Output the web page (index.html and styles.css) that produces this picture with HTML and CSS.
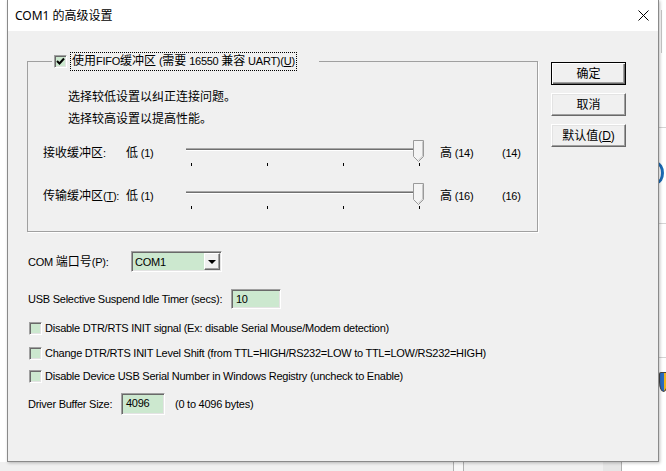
FILE: index.html
```html
<!DOCTYPE html>
<html lang="zh-CN">
<head>
    <meta charset="UTF-8">
    <title>COM1 的高级设置</title>
    <link rel="stylesheet" href="styles.css">
</head>
<body>
    <!-- what shows of the windows behind the dialog -->
    <div class="behind">
        <i class="rTop"></i>
        <i class="rLine l1"></i>
        <i class="rLine l2"></i>
        <i class="rLine l3"></i>
        <i class="rArc"></i>
        <i class="rShield"></i>
        <div class="bottomStrip"></div>
    </div>

    <div class="dialog">
        <div class="titleBar">
            <span class="title">COM1 的高级设置</span>
            <svg class="close" width="11" height="11" viewBox="0 0 11 11">
                <path d="M0.5 0.5 L10.5 10.5 M10.5 0.5 L0.5 10.5" stroke="#000" stroke-width="1" fill="none"/>
            </svg>
        </div>

        <div class="dialogBody">
            <div class="main">
                <fieldset class="group">
                    <legend class="groupTitle">
                        <span class="field box">
                            <svg width="9" height="9" viewBox="0 0 9 9">
                                <path d="M1 4 L3.5 6.5 L8 1.5" stroke="#000" stroke-width="2" fill="none"/>
                            </svg>
                        </span>
                        <span class="focus"><span class="zh">使用</span>FIFO<span class="zh">缓冲区</span> (<span class="zh">需要</span> 16550 <span class="zh">兼容</span> UART)(<u>U</u>)</span>
                    </legend>

                    <p class="hint first zh">选择较低设置以纠正连接问题。</p>
                    <p class="hint zh">选择较高设置以提高性能。</p>

                    <div class="sliderRow">
                        <span class="name"><span class="zh">接收缓冲区</span>:</span>
                        <span class="low"><span class="zh">低</span> (1)</span>
                        <div class="slider">
                            <div class="track"></div>
                            <svg class="thumb" width="11" height="22" viewBox="0 0 11 22">
                                <path d="M0.5 0.5 H10.5 V16.5 L5.5 21.5 L0.5 16.5 Z" fill="#f4f4f4" stroke="#9a9a9a"/>
                                <path d="M9.5 1.5 V16 L5.5 20" stroke="#c8c8c8" fill="none"/>
                            </svg>
                            <div class="ticks"><i></i><i></i><i></i><i></i></div>
                        </div>
                        <span class="high"><span class="zh">高</span> (14)</span>
                        <span class="value">(14)</span>
                    </div>

                    <div class="sliderRow">
                        <span class="name"><span class="zh">传输缓冲区</span>(<u>T</u>):</span>
                        <span class="low"><span class="zh">低</span> (1)</span>
                        <div class="slider">
                            <div class="track"></div>
                            <svg class="thumb" width="11" height="22" viewBox="0 0 11 22">
                                <path d="M0.5 0.5 H10.5 V16.5 L5.5 21.5 L0.5 16.5 Z" fill="#f4f4f4" stroke="#9a9a9a"/>
                                <path d="M9.5 1.5 V16 L5.5 20" stroke="#c8c8c8" fill="none"/>
                            </svg>
                            <div class="ticks"><i></i><i></i><i></i><i></i></div>
                        </div>
                        <span class="high"><span class="zh">高</span> (16)</span>
                        <span class="value">(16)</span>
                    </div>
                </fieldset>

                <div class="row comRow">
                    <span class="label">COM <span class="zh">端口号</span>(P):</span>
                    <div class="field combo">
                        <span>COM1</span>
                        <span class="dropBtn"><i class="arrow"></i></span>
                    </div>
                </div>

                <div class="row usbRow">
                    <span class="label">USB Selective Suspend Idle Timer (secs):</span>
                    <div class="field text">10</div>
                </div>

                <div class="row checkRow c1">
                    <span class="field box"></span>
                    <span>Disable DTR/RTS INIT signal (Ex: disable Serial Mouse/Modem detection)</span>
                </div>
                <div class="row checkRow c2">
                    <span class="field box"></span>
                    <span>Change DTR/RTS INIT Level Shift (from TTL=HIGH/RS232=LOW to TTL=LOW/RS232=HIGH)</span>
                </div>
                <div class="row checkRow c3">
                    <span class="field box"></span>
                    <span>Disable Device USB Serial Number in Windows Registry (uncheck to Enable)</span>
                </div>

                <div class="row bufferRow">
                    <span class="label">Driver Buffer Size:</span>
                    <div class="field text small">4096</div>
                    <span class="range">(0 to 4096 bytes)</span>
                </div>
            </div>

            <div class="buttons">
                <button class="btn default"><span class="zh">确定</span></button>
                <button class="btn"><span class="zh">取消</span></button>
                <button class="btn"><span class="zh">默认值</span>(<u>D</u>)</button>
            </div>
        </div>
    </div>
</body>
</html>
```

FILE: styles.css
```css
*{
    margin: 0;
    padding: 0;
    box-sizing: border-box;
}
body{
    width: 666px;
    height: 471px;
    overflow: hidden;
    position: relative;
    background-color: #fff;
    color: #000;
    font: 11px/16px "Liberation Sans", "Noto Sans CJK SC", sans-serif;
    letter-spacing: -0.25px;
}
/* chinese runs are a size up, like the dialog font */
.zh{
    font-size: 12px;
    letter-spacing: 0;
}

/* windows behind */
.behind i,
.bottomStrip{
    position: absolute;
    display: block;
}
.rTop{
    left: 661px;
    top: 10px;
    width: 1px;
    height: 43px;
    background-color: #c8c8c8;
}
.rLine{
    left: 659px;
    width: 7px;
    height: 1px;
    background-color: #d4d4d4;
}
.l1{ top: 127px; }
.l2{ top: 223px; }
.l3{ top: 357px; }
.rArc{
    left: 650px;
    top: 162px;
    width: 14px;
    height: 22px;
    border: 3px solid #1c6bb5;
    border-radius: 50%;
}
.rShield{
    left: 659px;
    top: 372px;
    width: 9px;
    height: 20px;
    border: 1px solid #444;
    border-radius: 2px 2px 50% 50%;
    background: linear-gradient(to right, #2a6cc0 50%, #f0b41e 50%);
}
.bottomStrip{
    left: 0;
    top: 462px;
    width: 666px;
    height: 9px;
    background: linear-gradient(to right,
        #f0f0f0 0 453px, #b0b0b0 453px 454px, #f7f7f7 454px 463px,
        #b0b0b0 463px 464px, #f0f0f0 464px 603px, #e6e6e6 603px 621px,
        #b0b0b0 621px 622px, #fff 622px);
}

/* dialog */
.dialog{
    position: absolute;
    left: 7px;
    top: 0;
    width: 652px;
    height: 462px;
    background-color: #f0f0f0;
    border: 1px solid #8a8a8a;
    border-top: 0;
    box-shadow: 1px 1px 3px rgba(0,0,0,0.25);
}
.titleBar{
    height: 31px;
    background-color: #fff;
    display: flex;
    align-items: center;
    justify-content: space-between;
    padding: 0 9px 0 7px;
}
.titleBar .title{
    font: 12px/16px "Noto Sans", "Noto Sans CJK SC", sans-serif;
    letter-spacing: 0;
}
.close{
    display: block;
}
.dialogBody{
    display: flex;
    padding-left: 19px;
}
.main{
    width: 511px;
    padding-top: 21px;
}

/* group box */
.group{
    margin: 0;
    padding: 0 0 7px 0;
    min-width: 0;
    border: 1px solid #a0a0a0;
    box-shadow: 1px 1px 0 #fff;
}
.groupTitle{
    margin-left: 24px;
    width: 267px;
    height: 19px;
    padding-left: 2px;
    display: flex;
    align-items: center;
}
.groupTitle .box{
    margin-right: 3px;
}
.focus{
    height: 19px;
    padding: 0 1px;
    line-height: 17px;
    border: 1px dotted #000;
    white-space: nowrap;
}
.hint{
    margin-left: 40px;
    line-height: 22px;
}
.hint.first{
    margin-top: 15px;
}
.sliderRow{
    display: flex;
    height: 43px;
    padding-left: 15px;
}
.hint + .sliderRow{
    margin-top: 8px;
}
.sliderRow .name,
.sliderRow .low,
.sliderRow .high,
.sliderRow .value{
    margin-top: 7px;
}
.sliderRow .name{ width: 83px; }
.sliderRow .low{ width: 58px; }
.sliderRow .high{ width: 62px; }
.slider{
    width: 256px;
    position: relative;
}
.track{
    margin: 10px 0 0 2px;
    width: 238px;
    height: 3px;
    background-color: #707070;
    border-top: 1px solid #a8a8a8;
    border-bottom: 1px solid #fff;
}
.thumb{
    position: absolute;
    left: 229px;
    top: 2px;
}
.ticks{
    display: flex;
    gap: 75px;
    padding-left: 7px;
    margin-top: 12px;
}
.ticks i{
    display: block;
    width: 1px;
    height: 3px;
    background-color: #000;
}

/* sunken green fields */
.field{
    background-color: #cce8cf;
    border: 1px solid;
    border-color: #a0a0a0 #fff #fff #a0a0a0;
    box-shadow: inset 1px 1px 0 #696969, inset -1px -1px 0 #e3e3e3;
}
.box{
    display: flex;
    align-items: center;
    justify-content: center;
    width: 13px;
    height: 13px;
    flex: none;
}

/* lower rows */
.row{
    display: flex;
    align-items: center;
    margin-left: 1px;
}
.comRow{
    margin-top: 19px;
    height: 21px;
}
.comRow .label{ width: 103px; }
.combo{
    width: 91px;
    height: 21px;
    display: flex;
    align-items: center;
    justify-content: space-between;
    padding: 1px 1px 1px 3px;
}
.dropBtn{
    width: 16px;
    height: 17px;
    display: flex;
    align-items: center;
    justify-content: center;
    background-color: #f0f0f0;
    border: 1px solid;
    border-color: #fff #696969 #696969 #fff;
    box-shadow: inset -1px -1px 0 #a0a0a0;
}
.arrow{
    display: block;
    width: 0;
    height: 0;
    border-left: 4px solid transparent;
    border-right: 4px solid transparent;
    border-top: 4px solid #000;
}
.usbRow{
    margin-top: 17px;
    height: 20px;
}
.usbRow .label{ width: 203px; }
.text{
    width: 50px;
    height: 20px;
    padding-left: 4px;
    line-height: 18px;
}
.checkRow{
    height: 16px;
}
.checkRow .box{
    margin-right: 3px;
    margin-left: 1px;
}
.c1{ margin-top: 11px; }
.c2{ margin-top: 9px; }
.c3{ margin-top: 7px; }
.bufferRow{
    margin-top: 9px;
    height: 22px;
}
.bufferRow .label{ width: 93px; }
.text.small{
    width: 44px;
    height: 22px;
    line-height: 16px;
    padding-top: 1px;
}
.range{
    margin-left: 10px;
}

/* buttons */
.buttons{
    margin-left: 13px;
    padding-top: 31px;
    display: flex;
    flex-direction: column;
    gap: 8px;
}
.btn{
    width: 75px;
    height: 23px;
    font: inherit;
    font-size: 12px;
    letter-spacing: 0;
    color: #000;
    background-color: #f0f0f0;
    border: 1px solid;
    border-color: #fff #696969 #696969 #fff;
    box-shadow: inset -1px -1px 0 #a0a0a0, inset 1px 1px 0 #e3e3e3;
}
.btn.default{
    border-color: #000;
    box-shadow: inset 1px 1px 0 #fff, inset -1px -1px 0 #696969, inset -2px -2px 0 #a0a0a0;
}
```
